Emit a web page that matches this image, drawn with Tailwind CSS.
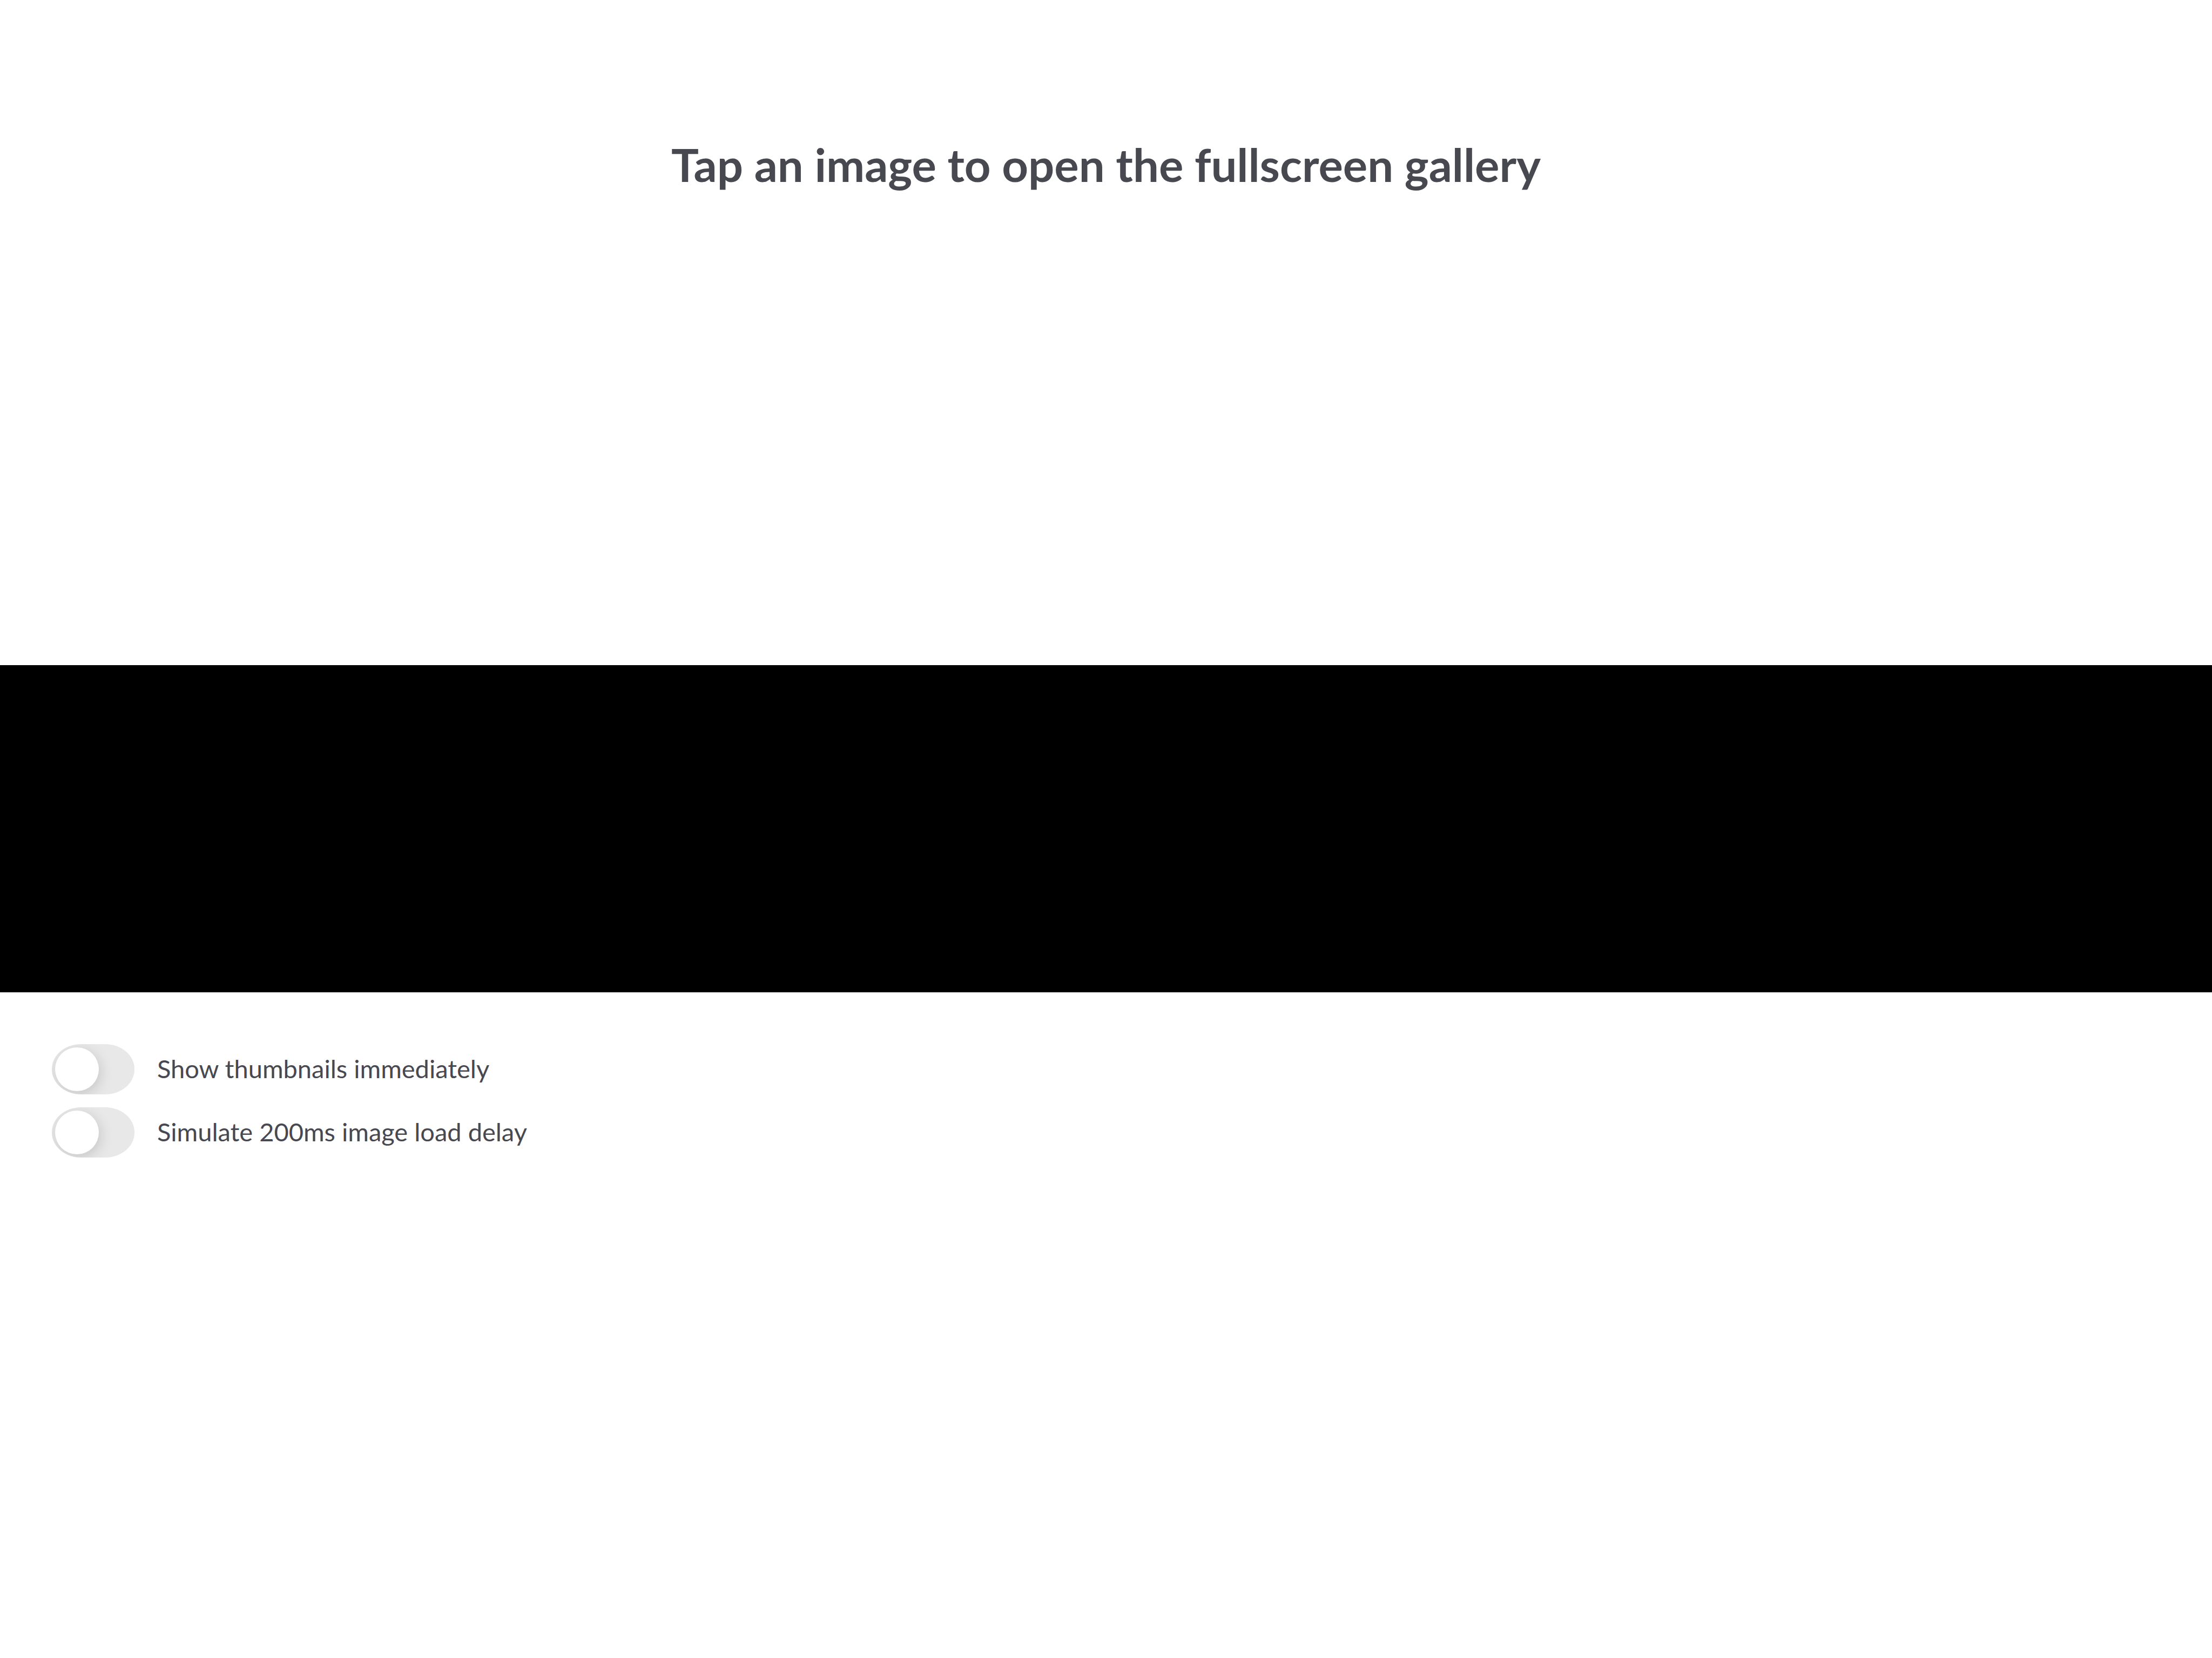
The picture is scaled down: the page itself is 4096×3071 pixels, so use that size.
<!DOCTYPE html>
<html lang="en">
<head>
<meta charset="utf-8">
<meta name="viewport" content="width=device-width, initial-scale=1">
<title>Fullscreen gallery</title>
<script src="https://cdn.jsdelivr.net/npm/@tailwindcss/browser@4"></script>
</head>
<body class="min-h-screen bg-white font-['Lato',sans-serif] text-[#484850]">
<main class="flex flex-col">
  <header class="px-24 pt-[244px] pb-[868px] text-center">
    <h1 class="text-[85px] leading-[120px] font-bold">Tap an image to open the fullscreen gallery</h1>
  </header>
  <section class="h-[606px] w-full bg-black" aria-label="Gallery"></section>
  <form class="flex flex-col items-start gap-6 px-24 py-24">
    <label class="flex items-start gap-[42px] text-[47px] leading-[90px]">
      <input type="checkbox" role="switch" class="flex h-[93px] w-[153px] shrink-0 appearance-none items-center overflow-hidden rounded-[54px/46px] bg-[#e8e8e8] px-1.5 before:size-[81px] before:rounded-full before:bg-white before:shadow-[3px_6px_24px_rgba(0,0,0,0.15)] before:content-[''] checked:justify-end checked:bg-[#4cd964]">
      <span>Show thumbnails immediately</span>
    </label>
    <label class="flex items-start gap-[42px] text-[47px] leading-[90px]">
      <input type="checkbox" role="switch" class="flex h-[93px] w-[153px] shrink-0 appearance-none items-center overflow-hidden rounded-[54px/46px] bg-[#e8e8e8] px-1.5 before:size-[81px] before:rounded-full before:bg-white before:shadow-[3px_6px_24px_rgba(0,0,0,0.15)] before:content-[''] checked:justify-end checked:bg-[#4cd964]">
      <span>Simulate 200ms image load delay</span>
    </label>
  </form>
</main>
</body>
</html>
